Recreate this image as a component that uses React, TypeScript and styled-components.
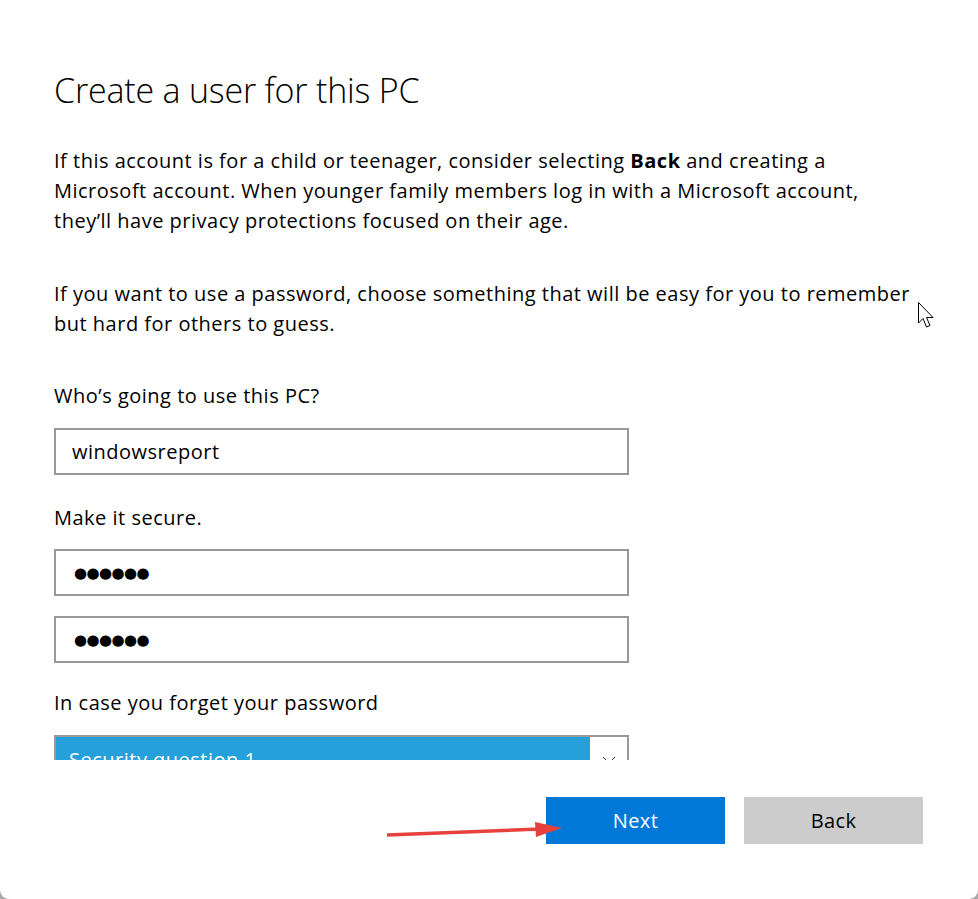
import React from "react";
import styled, { createGlobalStyle } from "styled-components";

const Global = createGlobalStyle`
  html, body { margin: 0; padding: 0; background: #a8a8a8; }
  body { font-family: "Open Sans", "Noto Sans", sans-serif; color: #000; }
  #root { width: 978px; height: 899px; }
`;

const Window = styled.div`
  position: relative;
  width: 978px;
  height: 899px;
  background: #fff;
  border-radius: 0 0 9px 9px;
  display: flex;
  flex-direction: column;
  overflow: hidden;
`;

const ScrollArea = styled.div`
  height: 760px;
  overflow: hidden;
  padding: 70px 40px 0 54px;
  box-sizing: border-box;
  display: flex;
  flex-direction: column;
  align-items: flex-start;
`;

const Title = styled.h1`
  margin: 0;
  font-family: "Open Sans", sans-serif;
  font-weight: 300;
  font-size: 34px;
  line-height: 40px;
  letter-spacing: -0.2px;
  color: #000;
  white-space: nowrap;
`;

const Paragraph = styled.p<{ $top: number }>`
  margin: ${(p) => p.$top}px 0 0 0;
  font-size: 20px;
  letter-spacing: 0.5px;
  line-height: 30px;
  white-space: nowrap;
`;

const Label = styled.div<{ $top: number }>`
  margin-top: ${(p) => p.$top}px;
  font-size: 20px;
  letter-spacing: 0.5px;
  line-height: 30px;
`;

const Field = styled.div<{ $top: number }>`
  margin-top: ${(p) => p.$top}px;
  width: 575px;
  height: 47px;
  box-sizing: border-box;
  border: 2px solid #999;
  background: #fff;
  display: flex;
  align-items: center;
  padding-left: 16px;
  font-size: 20px;
  letter-spacing: 0.5px;
  flex-shrink: 0;
`;

const Dots = styled.span`
  font-family: "DejaVu Sans", sans-serif;
  font-size: 15px;
  letter-spacing: -0.6px;
  padding-left: 2px;
`;

const Select = styled.div<{ $top: number }>`
  margin-top: ${(p) => p.$top}px;
  width: 575px;
  height: 47px;
  box-sizing: border-box;
  border: 2px solid #999;
  display: flex;
  flex-shrink: 0;
`;

const SelectValue = styled.div`
  flex: 1;
  background: #26a0da;
  color: #fff;
  font-size: 20px;
  letter-spacing: 0.5px;
  padding: 8px 0 0 13px;
  line-height: 30px;
`;

const SelectChevron = styled.div`
  width: 37px;
  background: #fff;
  display: flex;
  justify-content: center;
  padding-top: 19px;
  box-sizing: border-box;
`;

const Footer = styled.div`
  display: flex;
  justify-content: flex-end;
  gap: 19px;
  padding: 37px 55px 0 0;
`;

const Button = styled.button<{ $primary?: boolean }>`
  width: 179px;
  height: 47px;
  border: none;
  margin: 0;
  font-family: "Open Sans", sans-serif;
  font-size: 20px;
  letter-spacing: 0.4px;
  background: ${(p) => (p.$primary ? "#0078d7" : "#cccccc")};
  color: ${(p) => (p.$primary ? "#fff" : "#000")};
  padding: 0;
`;

const Overlay = styled.svg`
  position: absolute;
  pointer-events: none;
`;

export default function App() {
  return (
    <>
      <Global />
      <Window>
        <ScrollArea>
          <Title>Create a user for this PC</Title>
          <Paragraph $top={36}>
            If this account is for a child or teenager, consider selecting <b>Back</b> and creating a
            <br />
            Microsoft account. When younger family members log in with a Microsoft account,
            <br />
            they’ll have privacy protections focused on their age.
          </Paragraph>
          <Paragraph $top={43}>
            If you want to use a password, choose something that will be easy for you to remember
            <br />
            but hard for others to guess.
          </Paragraph>
          <Label $top={42}>Who’s going to use this PC?</Label>
          <Field $top={17}>windowsreport</Field>
          <Label $top={28}>Make it secure.</Label>
          <Field $top={16}>
            <Dots>●●●●●●</Dots>
          </Field>
          <Field $top={20}>
            <Dots>●●●●●●</Dots>
          </Field>
          <Label $top={25}>In case you forget your password</Label>
          <Select $top={17}>
            <SelectValue>Security question 1</SelectValue>
            <SelectChevron>
              <svg width="14" height="8" viewBox="0 0 14 8">
                <polyline points="1,1 7,7 13,1" fill="none" stroke="#333" strokeWidth="1" />
              </svg>
            </SelectChevron>
          </Select>
        </ScrollArea>
        <Footer>
          <Button $primary>Next</Button>
          <Button>Back</Button>
        </Footer>
        <Overlay style={{ left: 380, top: 815, width: 190, height: 30 }} viewBox="0 0 190 30">
          <line x1="7" y1="20" x2="160" y2="14" stroke="#e8403c" strokeWidth="3.5" />
          <polygon points="155,7 182,13 156,22" fill="#e8403c" />
        </Overlay>
        <Overlay style={{ left: 917, top: 301, width: 22, height: 30 }} viewBox="0 0 22 30">
          <path
            d="M1.5 1.5 L1.5 22 L6 17.5 L9.5 26 L13 24.5 L9.5 16.5 L16 16.5 Z"
            fill="#fff"
            stroke="#000"
            strokeWidth="1"
            strokeLinejoin="miter"
          />
        </Overlay>
      </Window>
    </>
  );
}
